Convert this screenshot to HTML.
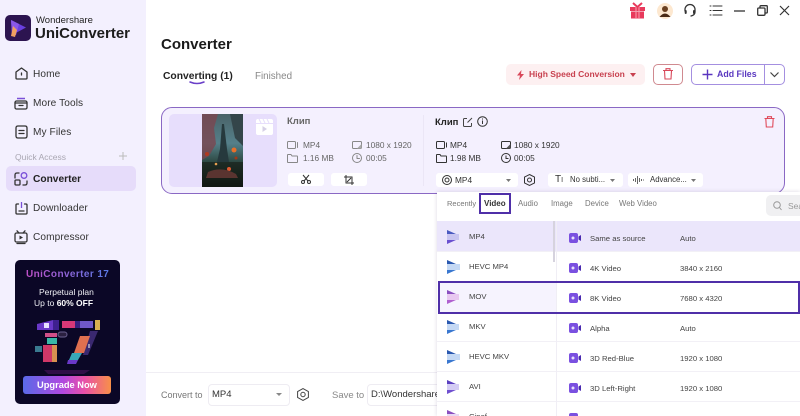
<!DOCTYPE html>
<html><head><meta charset="utf-8">
<style>
html,body{margin:0;padding:0;width:800px;height:416px;overflow:hidden;background:#fff;font-family:"Liberation Sans",sans-serif;color:#333}
.a{position:absolute}
.t{position:absolute;white-space:nowrap;line-height:1}
svg{position:absolute;overflow:visible}
.s{fill:none;stroke:#333;stroke-width:1.3;stroke-linecap:round;stroke-linejoin:round}
.g{fill:none;stroke:#888;stroke-width:1;stroke-linejoin:round;stroke-linecap:round}
.nav{font-size:10.1px;color:#333;letter-spacing:.1px}
.m{font-size:8.3px;color:#666}
.d{font-size:8.3px;color:#333}
.r{font-size:7.7px;color:#444}
.tab{font-size:7.8px;color:#777}
.line{position:absolute;height:1px;background:#f2f0f6}
</style></head><body>
<div class="a" style="left:0;top:0;width:800px;height:416px;overflow:hidden">

<!-- sidebar -->
<div class="a" style="left:0;top:0;width:146px;height:416px;background:#f3f0fe"></div>
<svg style="left:5px;top:15px" width="26" height="26" viewBox="0 0 26 26">
<rect width="26" height="26" rx="5" fill="#2c1450"/>
<path d="M6 5L21 12.500L7 20Z" fill="#6a3fe0"/><path d="M6 5L14 9L11 20L7 20Z" fill="#8a58e8"/>
<path d="M6 21L8 11L12 15L10 22Z" fill="#f0a060"/>
</svg>
<div class="t" style="left:36px;top:16px;font-size:9.500px;color:#222">Wondershare</div>
<div class="t" style="left:35px;top:25.500px;font-size:15px;font-weight:bold;color:#1c1c1c">UniConverter</div>

<svg style="left:15px;top:67px" width="13" height="13" viewBox="0 0 13 13"><path class="s" d="M1 5L6.500 1L12 5V11Q12 12 11 12H2Q1 12 1 11Z"/><path class="s" d="M6.500 6V8"/></svg>
<div class="t nav" style="left:33px;top:70px">Home</div>
<svg style="left:14px;top:96px" width="14" height="14" viewBox="0 0 14 14"><path d="M3 2.500H11" stroke="#7a50d8" stroke-width="1.500" fill="none"/><rect class="s" x="1" y="5" width="12" height="8" rx="1.500"/><path class="s" d="M1 7H13M5 9.500H9"/></svg>
<div class="t nav" style="left:33px;top:99px">More Tools</div>
<svg style="left:15px;top:125px" width="13" height="14" viewBox="0 0 13 14"><path class="s" d="M3 1H10Q12 1 12 3V11Q12 13 10 13H3Q1 13 1 11V3Q1 1 3 1Z"/><path class="s" d="M4 5.500H9M4 8.500H9"/></svg>
<div class="t nav" style="left:33px;top:128px">My Files</div>
<div class="t" style="left:15px;top:153px;font-size:8.500px;color:#a9a6b2">Quick Access</div>
<svg style="left:119px;top:152px" width="8" height="8" viewBox="0 0 8 8"><path d="M4 0V8M0 4H8" stroke="#bbb" stroke-width="1"/></svg>
<div class="a" style="left:6px;top:166px;width:130px;height:25px;background:#e6dcfa;border-radius:5px"></div>
<svg style="left:14px;top:172px" width="14" height="14" viewBox="0 0 14 14"><circle cx="10" cy="3.500" r="2.800" fill="none" stroke="#7a50d8" stroke-width="1.300"/><path class="s" d="M1 6V3Q1 1 3 1H5M13 9V11Q13 13 11 13H9"/><rect class="s" x="1" y="8" width="5" height="5" rx="1"/></svg>
<div class="t" style="left:33px;top:175px;font-size:10.200px;font-weight:bold;color:#222">Converter</div>
<svg style="left:15px;top:201px" width="13" height="14" viewBox="0 0 13 14"><path class="s" d="M3.500 3H2Q1 3 1 4V12Q1 13 2 13H11Q12 13 12 12V4Q12 3 11 3H9.500"/><path d="M6.500 1V7" stroke="#7a50d8" stroke-width="1.300"/><path class="s" d="M4 10H9"/></svg>
<div class="t nav" style="left:33px;top:204px">Downloader</div>
<svg style="left:14px;top:230px" width="14" height="14" viewBox="0 0 14 14"><rect class="s" x="1" y="3" width="12" height="9" rx="1.500"/><path class="s" d="M3 .8L5 3M11 .8L9 3M3 13.500H11"/><path d="M5.500 5.500L9 7.500L5.500 9.500Z" fill="#333"/></svg>
<div class="t nav" style="left:33px;top:233px">Compressor</div>

<!-- promo -->
<div class="a" style="left:15px;top:260px;width:105px;height:144px;border-radius:5px;background:#0b0726"></div>
<div class="t" style="left:26px;top:270px;font-size:10px;font-weight:bold;background:linear-gradient(90deg,#c050c8,#5a7ae8);-webkit-background-clip:text;background-clip:text;color:transparent;letter-spacing:.4px">UniConverter 17</div>
<div class="t" style="left:39px;top:287.500px;font-size:8.500px;color:#f0f0f5">Perpetual plan</div>
<div class="t" style="left:34px;top:299px;font-size:8.500px;color:#f0f0f5">Up to <b style="color:#fff">60% OFF</b></div>
<svg style="left:34px;top:318px" width="68" height="56" viewBox="0 0 68 56">
<path d="M10 52H56L50 56H14Z" fill="#3a1050" opacity=".8"/>
<path d="M3 6L19 2V12H3Z" fill="#6a38c8"/>
<rect x="19" y="2" width="6" height="10" fill="#3f2090"/>
<rect x="10" y="5" width="5" height="5" fill="#e8e0ff"/>
<rect x="28" y="3" width="13" height="7" fill="#d83878"/>
<rect x="46" y="3" width="13" height="7" fill="#7058c8"/>
<rect x="61" y="2" width="5" height="10" fill="#d8b050"/>
<rect x="41" y="3" width="5" height="7" fill="#3a2080"/>
<rect x="11" y="15" width="12" height="4" fill="#d05088"/>
<rect x="13" y="20" width="10" height="6" fill="#38b8a8"/>
<rect x="1" y="28" width="7" height="6" fill="#3a7a90"/>
<rect x="9" y="27" width="9" height="17" fill="#d03868"/>
<rect x="18" y="27" width="5" height="17" fill="#d89050"/>
<rect x="24" y="14" width="9" height="5" rx="2.500" fill="#2a2040" stroke="#6a6090"/>
<path d="M56 13H64L54 37H49Z" fill="#3a2870"/>
<path d="M46 18H56L50 35H40Z" fill="#e07050"/>
<path d="M38 35H48L44 42H35Z" fill="#38a8b8"/>
<path d="M34 42H44L42 46H33Z" fill="#6a38c8"/>
<path d="M55 26V30" stroke="#fff"/>
</svg>
<div class="a" style="left:23px;top:376px;width:88px;height:18px;border-radius:3px;background:linear-gradient(90deg,#5a6ae8,#b048e0 45%,#e850a8 70%,#f89048)"></div>
<div class="t" style="left:37px;top:380.500px;font-size:9.300px;font-weight:bold;color:#fff">Upgrade Now</div>

<!-- header -->
<div class="t" style="left:161px;top:37px;font-size:15px;font-weight:bold;color:#1a1a1a">Converter</div>
<div class="t" style="left:163px;top:72px;font-size:10.300px;font-weight:bold;color:#222">Converting (1)</div>
<svg style="left:189px;top:81px" width="16" height="4" viewBox="0 0 16 4"><path d="M1 1Q8 4 15 1" fill="none" stroke="#6a3fc8" stroke-width="1.500" stroke-linecap="round"/></svg>
<div class="t" style="left:255px;top:72px;font-size:9.800px;color:#888">Finished</div>

<!-- top right icons -->
<svg style="left:629px;top:2px" width="17" height="17" viewBox="0 0 17 17"><rect x="1" y="5" width="15" height="4" fill="#e83a5c"/><rect x="2" y="9.500" width="13" height="7" fill="#e83a5c"/><path d="M7 5V17M10 5V17" stroke="#f7a0b0"/><path d="M8.500 5L4 1M8.500 5L13 1" stroke="#e83a5c" stroke-width="2"/></svg>
<svg style="left:657px;top:3px" width="16" height="16" viewBox="0 0 16 16"><circle cx="8" cy="8" r="8" fill="#fde8d0"/><circle cx="8" cy="6" r="3" fill="#6b4020"/><path d="M2.500 14Q8 7 13.500 14Z" fill="#4a2a15"/></svg>
<svg style="left:684px;top:4px" width="12" height="13" viewBox="0 0 12 13"><path class="s" d="M1 7V5.500A5 5 0 0 1 11 5.500V8Q11 11 7 12"/><rect x=".7" y="6" width="2" height="4" rx="1" fill="#333"/><rect x="9" y="6" width="2" height="4" rx="1" fill="#333"/></svg>
<svg style="left:710px;top:5px" width="12" height="11" viewBox="0 0 12 11"><path class="s" d="M3 1H12M3 5.500H12M3 10H12M0 1H1M0 5.500H1M0 10H1" style="stroke-width:1"/></svg>
<svg style="left:734px;top:10px" width="11" height="2" viewBox="0 0 11 2"><path d="M0 1H11" stroke="#333" stroke-width="1.300"/></svg>
<svg style="left:757px;top:5px" width="11" height="11" viewBox="0 0 11 11"><path class="s" d="M3 3V1.500Q3 .7 4 .7H9.500Q10.300 .7 10.300 1.500V7Q10.300 8 9.500 8H8"/><rect class="s" x=".7" y="3" width="7.300" height="7.300" rx="1"/></svg>
<svg style="left:780px;top:6px" width="9" height="9" viewBox="0 0 9 9"><path d="M0 0L9 9M9 0L0 9" stroke="#333" stroke-width="1.200"/></svg>

<!-- action buttons -->
<div class="a" style="left:506px;top:64px;width:139px;height:21px;background:#fdf0f1;border-radius:5px"></div>
<svg style="left:517px;top:70px" width="7" height="10" viewBox="0 0 7 10"><path d="M4.500 0L0 5.500H3L2 10L7 4H4Z" fill="#d8485a"/></svg>
<div class="t" style="left:529px;top:70px;font-size:8.500px;font-weight:bold;color:#c8414f;line-height:9px">High Speed Conversion</div>
<svg style="left:630px;top:73px" width="6" height="4" viewBox="0 0 6 4"><path d="M0 0H6L3 4Z" fill="#c8414f"/></svg>
<div class="a" style="left:653px;top:64px;width:28px;height:19px;border:1px solid #d08a90;border-radius:5px;background:#fff"></div>
<svg style="left:663px;top:68px" width="10" height="12" viewBox="0 0 10 12"><path d="M0 2.500H10M3 2.500V.7H7V2.500M1.500 2.500L2 11H8L8.500 2.500" fill="none" stroke="#d8485a" stroke-width="1.100"/></svg>
<div class="a" style="left:691px;top:64px;width:92px;height:19px;border:1px solid #a48fe0;border-radius:5px;background:#fff"></div>
<div class="a" style="left:764px;top:65px;width:1px;height:19px;background:#a48fe0"></div>
<svg style="left:702px;top:69px" width="11" height="11" viewBox="0 0 11 11"><path d="M5.500 .5V10.500M.5 5.500H10.500" stroke="#5a35c0" stroke-width="1.400"/></svg>
<div class="t" style="left:717px;top:70px;font-size:8.800px;font-weight:bold;color:#5a38c0">Add Files</div>
<svg style="left:770px;top:72px" width="9" height="5" viewBox="0 0 9 5"><path d="M.5 .5L4.500 4.500L8.500 .5" fill="none" stroke="#444" stroke-width="1.200"/></svg>

<!-- card -->
<div class="a" style="left:161px;top:107px;width:622px;height:85px;border:1.500px solid #8a68c4;border-radius:11px;background:#f4f0fe"></div>
<div class="a" style="left:169px;top:114px;width:108px;height:73px;background:#e7defc;border-radius:5px"></div>
<svg style="left:202px;top:114px" width="41" height="73" viewBox="0 0 41 73">
<defs><linearGradient id="sky" x1="0" y1="0" x2="0" y2="1"><stop offset="0" stop-color="#4a6268"/><stop offset=".4" stop-color="#55808a"/><stop offset=".68" stop-color="#2a443c"/><stop offset="1" stop-color="#0c1410"/></linearGradient></defs>
<rect width="41" height="73" fill="url(#sky)"/>
<path d="M0 0H16L12 14L14 30L7 42L0 46Z" fill="#7a4650" opacity=".8"/>
<path d="M28 0H41V32L33 24Z" fill="#34454a"/>
<path d="M20 10L22 10L25 35L27 48H15L18 35Z" fill="#26393d"/>
<rect x="0" y="48" width="41" height="25" fill="#161a14" opacity=".6"/>
<circle cx="32" cy="36" r="2.500" fill="#e8702a"/><circle cx="5" cy="40" r="2" fill="#b03a20"/><circle cx="34" cy="44" r="1.500" fill="#a03818"/>
<circle cx="27" cy="55" r="2" fill="#e05a30"/><circle cx="14" cy="50" r="1.300" fill="#e8a050"/>
<path d="M6 58Q20 52 34 60L36 64H4Z" fill="#5a3430"/>
</svg>
<svg style="left:256px;top:119px" width="17" height="16" viewBox="0 0 17 16"><path d="M2 0H15Q17 0 17 2V14Q17 16 15 16H2Q0 16 0 14V2Q0 0 2 0Z" fill="#fff"/><path d="M0 4.500H17" stroke="#e7defc"/><path d="M3 0L5 4M7 0L9 4M11 0L13 4" stroke="#e7defc"/><path d="M6.500 7L11 10L6.500 13Z" fill="#d6d0e6"/></svg>

<div class="t" style="left:287px;top:117px;font-size:9.500px;font-weight:bold;color:#666">Клип</div>
<svg style="left:287px;top:141px" width="12" height="8" viewBox="0 0 12 8"><rect class="g" x=".5" y=".5" width="8" height="7" rx="1"/><path class="g" d="M10.500 1.500V6.500"/></svg>
<div class="t m" style="left:303px;top:141px">MP4</div>
<svg style="left:287px;top:154px" width="11" height="9" viewBox="0 0 11 9"><path class="g" d="M.5 1Q.5 .5 1 .5H4L5 2H10Q10.500 2 10.500 2.500V8Q10.500 8.500 10 8.500H1Q.5 8.500 .5 8Z"/></svg>
<div class="t m" style="left:303px;top:154px">1.16 MB</div>
<svg style="left:352px;top:141px" width="10" height="8" viewBox="0 0 10 8"><rect class="g" x=".5" y=".5" width="9" height="7" rx="1"/><path d="M5 7.500H9.500V3Z" fill="#aaa"/></svg>
<div class="t m" style="left:366px;top:141px">1080 x 1920</div>
<svg style="left:352px;top:153px" width="10" height="10" viewBox="0 0 10 10"><circle class="g" cx="5" cy="5" r="4.500"/><path class="g" d="M5 2.500V5.500H7.500"/></svg>
<div class="t m" style="left:366px;top:154px">00:05</div>
<div class="a" style="left:288px;top:173px;width:36px;height:13px;background:#fff;border-radius:3px"></div>
<div class="a" style="left:331px;top:173px;width:36px;height:13px;background:#fff;border-radius:3px"></div>
<svg style="left:301px;top:175px" width="10" height="9" viewBox="0 0 10 9"><circle cx="2" cy="7" r="1.500" fill="none" stroke="#333"/><circle cx="8" cy="7" r="1.500" fill="none" stroke="#333"/><path d="M3 6L8 0M7 6L2 0" stroke="#333"/></svg>
<svg style="left:344px;top:175px" width="10" height="10" viewBox="0 0 10 10"><path d="M2 0V8H10M0 2H8V10" fill="none" stroke="#333"/><path d="M3 7L7 3" stroke="#333"/></svg>
<div class="a" style="left:423px;top:115px;width:1px;height:71px;background:#ebe6f6"></div>

<div class="t" style="left:435px;top:118px;font-size:9.500px;font-weight:bold;color:#222">Клип</div>
<svg style="left:463px;top:117px" width="10" height="10" viewBox="0 0 10 10"><path d="M4 1.500H1.500Q.5 1.500 .5 2.500V8.500Q.5 9.500 1.500 9.500H7.500Q8.500 9.500 8.500 8.500V6" fill="none" stroke="#444"/><path d="M4.500 5.500L9 1" stroke="#444"/></svg>
<svg style="left:477px;top:116px" width="11" height="11" viewBox="0 0 11 11"><circle cx="5.500" cy="5.500" r="4.800" fill="none" stroke="#333"/><path d="M5.500 4.500V8M5.500 2.500V3.500" stroke="#333"/></svg>
<svg style="left:436px;top:141px" width="12" height="8" viewBox="0 0 12 8"><rect x=".5" y=".5" width="8" height="7" rx="1" fill="none" stroke="#333"/><path d="M10.500 1.500V6.500" stroke="#333"/></svg>
<div class="t d" style="left:450px;top:141px">MP4</div>
<svg style="left:436px;top:154px" width="11" height="9" viewBox="0 0 11 9"><path d="M.5 1Q.5 .5 1 .5H4L5 2H10Q10.500 2 10.500 2.500V8Q10.500 8.500 10 8.500H1Q.5 8.500 .5 8Z" fill="none" stroke="#333"/></svg>
<div class="t d" style="left:450px;top:154px">1.98 MB</div>
<svg style="left:501px;top:141px" width="10" height="8" viewBox="0 0 10 8"><rect x=".5" y=".5" width="9" height="7" rx="1" fill="none" stroke="#333"/><path d="M5 7.500H9.500V3Z" fill="#555"/></svg>
<div class="t d" style="left:514px;top:141px">1080 x 1920</div>
<svg style="left:501px;top:153px" width="10" height="10" viewBox="0 0 10 10"><circle cx="5" cy="5" r="4.500" fill="none" stroke="#333"/><path d="M5 2.500V5.500H7.500" fill="none" stroke="#333"/></svg>
<div class="t d" style="left:514px;top:154px">00:05</div>
<svg style="left:764px;top:116px" width="11" height="12" viewBox="0 0 11 12"><path d="M.5 2.500H10.500M3.500 2.500V.7H7.500V2.500M1.800 2.500L2.300 11H8.700L9.200 2.500" fill="none" stroke="#e04a5a" stroke-width="1.100"/></svg>

<div class="a" style="left:436px;top:173px;width:82px;height:14px;background:#fff;border-radius:3px"></div>
<svg style="left:442px;top:175px" width="10" height="10" viewBox="0 0 10 10"><circle cx="5" cy="5" r="4.500" fill="none" stroke="#333"/><circle cx="5" cy="5" r="2" fill="none" stroke="#333"/></svg>
<div class="t d" style="left:455px;top:176px">MP4</div>
<svg style="left:506px;top:179px" width="5" height="3" viewBox="0 0 5 3"><path d="M0 0H5L2.500 3Z" fill="#777"/></svg>
<svg style="left:524px;top:174px" width="11" height="12" viewBox="0 0 11 12"><path d="M5.500 .5L10.500 3V9L5.500 11.500L.5 9V3Z" fill="none" stroke="#333"/><circle cx="5.500" cy="6" r="2" fill="none" stroke="#333"/></svg>
<div class="a" style="left:548px;top:173px;width:75px;height:14px;background:#fff;border-radius:3px"></div>
<div class="t" style="left:555px;top:175px;font-size:10px;color:#333">T<span style="font-size:7px">I</span></div>
<div class="t" style="left:570px;top:176px;font-size:7.800px;color:#333">No subti...</div>
<svg style="left:610px;top:179px" width="5" height="3" viewBox="0 0 5 3"><path d="M0 0H5L2.500 3Z" fill="#777"/></svg>
<div class="a" style="left:628px;top:173px;width:75px;height:14px;background:#fff;border-radius:3px"></div>
<svg style="left:633px;top:176px" width="11" height="8" viewBox="0 0 11 8"><path d="M.5 3V5M2.500 2V6M4.500 0V8M6.500 2V6M8.500 3V5M10.500 3.500V4.500" stroke="#444" stroke-width=".8"/></svg>
<div class="t" style="left:650px;top:176px;font-size:7.800px;color:#333">Advance...</div>
<svg style="left:691px;top:179px" width="5" height="3" viewBox="0 0 5 3"><path d="M0 0H5L2.500 3Z" fill="#777"/></svg>

<!-- bottom bar -->
<div class="a" style="left:146px;top:372px;width:291px;height:1px;background:#f0eef4"></div>
<div class="t" style="left:161px;top:390.500px;font-size:9px;color:#777">Convert to</div>
<div class="a" style="left:208px;top:384px;width:80px;height:20px;border:1px solid #eeecf2;border-radius:4px;background:#fff"></div>
<div class="t" style="left:212px;top:390px;font-size:9.500px;color:#333">MP4</div>
<svg style="left:276px;top:393px" width="6" height="3" viewBox="0 0 6 3"><path d="M0 0H6L3 3Z" fill="#888"/></svg>
<svg style="left:297px;top:388px" width="12" height="13" viewBox="0 0 12 13"><path d="M6 .6L11.400 3.500V9.500L6 12.400L.6 9.500V3.500Z" fill="none" stroke="#444"/><circle cx="6" cy="6.500" r="2.200" fill="none" stroke="#444"/></svg>
<div class="t" style="left:332px;top:390.500px;font-size:9.500px;color:#888">Save to</div>
<div class="a" style="left:367px;top:384px;width:80px;height:20px;border:1px solid #eeecf2;border-radius:4px;background:#fff"></div>
<div class="t" style="left:371px;top:390px;font-size:9.500px;color:#333">D:\Wondershare</div>

<!-- dropdown -->
<div class="a" style="left:437px;top:192px;width:363px;height:224px;background:#fff;box-shadow:0 0 4px rgba(60,40,100,.18)"></div>
<div class="t tab" style="left:447px;top:200px;font-size:7.500px">Recently</div>
<div class="a" style="left:479px;top:193px;width:28px;height:17px;border:2px solid #4f2fa8;background:#fff"></div>
<div class="t" style="left:484px;top:199.500px;font-size:8px;font-weight:bold;color:#333">Video</div>
<div class="t tab" style="left:518px;top:200px">Audio</div>
<div class="t tab" style="left:551px;top:200px">Image</div>
<div class="t tab" style="left:585px;top:200px">Device</div>
<div class="t tab" style="left:619px;top:200px">Web Video</div>
<div class="a" style="left:766px;top:195px;width:40px;height:21px;background:#f0f0f2;border-radius:5px"></div>
<svg style="left:773px;top:201px" width="9" height="10" viewBox="0 0 9 10"><circle cx="4" cy="4" r="3.300" fill="none" stroke="#999"/><path d="M6.500 6.500L8.500 9" stroke="#999"/></svg>
<div class="t" style="left:788px;top:202px;font-size:8.500px;color:#999">Sea</div>

<div class="a" style="left:437px;top:221px;width:363px;height:30px;background:#ebe6fb"></div>
<div class="a" style="left:438px;top:282px;width:362px;height:30px;background:#f6f3fe"></div>
<div class="a" style="left:557px;top:282px;width:243px;height:30px;background:#fff"></div>
<div class="line" style="left:437px;top:251px;width:363px"></div>
<div class="line" style="left:437px;top:341px;width:363px"></div>
<div class="line" style="left:437px;top:371px;width:363px"></div>
<div class="line" style="left:437px;top:401px;width:363px"></div>
<div class="a" style="left:556px;top:221px;width:1px;height:195px;background:#f0eef5"></div>
<div class="a" style="left:553px;top:221px;width:2px;height:41px;background:#d6d3de"></div>

<!-- format icons -->
<svg style="left:0;top:0" width="800" height="416" viewBox="0 0 800 416">
<g transform="translate(447,230)"><path d="M0 0L9 4H0Z" fill="#4a5ac0"/><rect x="0" y="4" width="12" height="6" fill="#c8c4f0"/><path d="M0 10H9L0 14Z" fill="#6a50d0"/></g>
<g transform="translate(447,260)"><path d="M0 0L9 4H0Z" fill="#2a58b0"/><rect x="0" y="4" width="13" height="6" fill="#c4d8f4"/><path d="M0 10H9L0 14Z" fill="#3a78d0"/></g>
<g transform="translate(447,290)"><path d="M0 0L9 4H0Z" fill="#8a50c0"/><rect x="0" y="4" width="12" height="6" fill="#e8c8f0"/><path d="M0 10H9L0 14Z" fill="#b060d0"/></g>
<g transform="translate(447,320)"><path d="M0 0L9 4H0Z" fill="#2a58b0"/><rect x="0" y="4" width="12" height="6" fill="#c4d8f4"/><path d="M0 10H9L0 14Z" fill="#3a78d0"/></g>
<g transform="translate(447,350)"><path d="M0 0L9 4H0Z" fill="#2a58b0"/><rect x="0" y="4" width="13" height="6" fill="#c4d8f4"/><path d="M0 10H9L0 14Z" fill="#3a78d0"/></g>
<g transform="translate(447,380)"><path d="M0 0L9 4H0Z" fill="#5a40c0"/><rect x="0" y="4" width="12" height="6" fill="#d4ccf4"/><path d="M0 10H9L0 14Z" fill="#7050d0"/></g>
<g transform="translate(447,410)"><path d="M0 0L9 4H0Z" fill="#8a50c0"/><rect x="0" y="4" width="12" height="6" fill="#e8d8f4"/></g>
<g fill="#7a50e0">
<g transform="translate(569,233)"><rect width="9" height="10" rx="2"/><path d="M9.500 3.500L12 2V8L9.500 6.500Z" fill="#4a2ab0"/><circle cx="4" cy="5" r="1.500" fill="#e8e0fc"/></g>
<g transform="translate(569,263)"><rect width="9" height="10" rx="2"/><path d="M9.500 3.500L12 2V8L9.500 6.500Z" fill="#4a2ab0"/><circle cx="4" cy="5" r="1.500" fill="#e8e0fc"/></g>
<g transform="translate(569,293)"><rect width="9" height="10" rx="2"/><path d="M9.500 3.500L12 2V8L9.500 6.500Z" fill="#4a2ab0"/><circle cx="4" cy="5" r="1.500" fill="#e8e0fc"/></g>
<g transform="translate(569,323)"><rect width="9" height="10" rx="2"/><path d="M9.500 3.500L12 2V8L9.500 6.500Z" fill="#4a2ab0"/><circle cx="4" cy="5" r="1.500" fill="#e8e0fc"/></g>
<g transform="translate(569,353)"><rect width="9" height="10" rx="2"/><path d="M9.500 3.500L12 2V8L9.500 6.500Z" fill="#4a2ab0"/><circle cx="4" cy="5" r="1.500" fill="#e8e0fc"/></g>
<g transform="translate(569,383)"><rect width="9" height="10" rx="2"/><path d="M9.500 3.500L12 2V8L9.500 6.500Z" fill="#4a2ab0"/><circle cx="4" cy="5" r="1.500" fill="#e8e0fc"/></g>
<g transform="translate(569,413)"><rect width="9" height="10" rx="2"/></g>
</g>
</svg>

<div class="t r" style="left:469px;top:233px">MP4</div>
<div class="t r" style="left:469px;top:263px">HEVC MP4</div>
<div class="t r" style="left:469px;top:293px">MOV</div>
<div class="t r" style="left:469px;top:323px">MKV</div>
<div class="t r" style="left:469px;top:353px">HEVC MKV</div>
<div class="t r" style="left:469px;top:383px">AVI</div>
<div class="t r" style="left:469px;top:413px">Cinef</div>

<div class="t r" style="left:590px;top:235px">Same as source</div>
<div class="t r" style="left:590px;top:265px">4K Video</div>
<div class="t r" style="left:590px;top:295px">8K Video</div>
<div class="t r" style="left:590px;top:325px">Alpha</div>
<div class="t r" style="left:590px;top:355px">3D Red-Blue</div>
<div class="t r" style="left:590px;top:385px">3D Left-Right</div>
<div class="t r" style="left:680px;top:235px">Auto</div>
<div class="t r" style="left:680px;top:265px">3840 x 2160</div>
<div class="t r" style="left:680px;top:295px">7680 x 4320</div>
<div class="t r" style="left:680px;top:325px">Auto</div>
<div class="t r" style="left:680px;top:355px">1920 x 1080</div>
<div class="t r" style="left:680px;top:385px">1920 x 1080</div>

<div class="a" style="left:438px;top:281px;width:358px;height:29px;border:2px solid #4f2fa8"></div>
</div>
</body></html>
